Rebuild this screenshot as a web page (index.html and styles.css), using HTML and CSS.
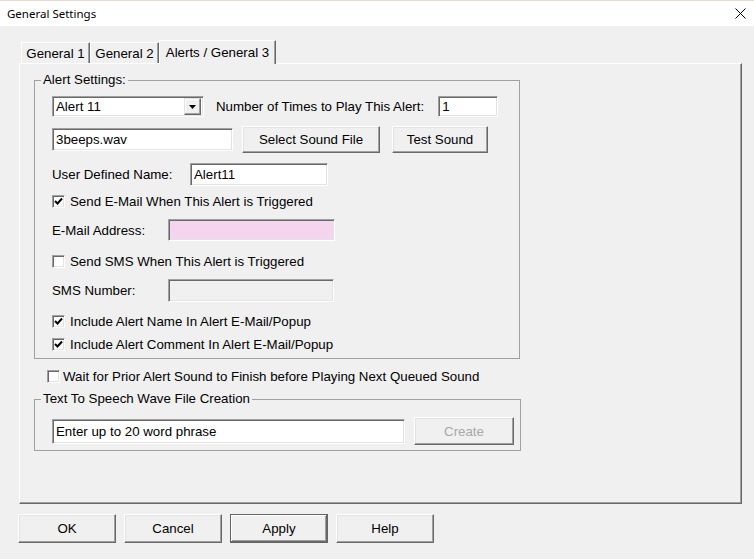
FILE: index.html
```html
<!DOCTYPE html>
<html lang="en">

<head>
    <meta charset="UTF-8">
    <title>General Settings</title>
    <link rel="stylesheet" href="styles.css">
</head>

<body>
    <div class="window">
        <div class="titlebar">
            <span>General Settings</span>
            <svg class="close" width="11" height="11" viewBox="0 0 11 11">
                <path d="M0.5 0.5 L10.5 10.5 M10.5 0.5 L0.5 10.5" stroke="#000" stroke-width="1" fill="none" />
            </svg>
        </div>

        <div class="tabs">
            <div class="tab">General 1</div>
            <div class="tab">General 2</div>
            <div class="tab active">Alerts / General 3</div>
        </div>

        <div class="panel">
            <fieldset class="group alerts">
                <legend>Alert Settings:</legend>
                <div class="rows">
                    <div class="row">
                        <div class="field combo">
                            <span>Alert 11</span>
                            <span class="drop">
                                <svg width="7" height="4" viewBox="0 0 7 4"><path d="M0 0 H7 L3.5 4 Z" fill="#000" /></svg>
                            </span>
                        </div>
                        <span class="label-times">Number of Times to Play This Alert:</span>
                        <div class="field count">1</div>
                    </div>
                    <div class="row">
                        <div class="field file">3beeps.wav</div>
                        <div class="btn select">Select Sound File</div>
                        <div class="btn test">Test Sound</div>
                    </div>
                    <div class="row">
                        <span class="label w-138">User Defined Name:</span>
                        <div class="field name">Alert11</div>
                    </div>
                    <div class="row">
                        <span class="check on"><svg width="9" height="9" viewBox="0 0 9 9"><path d="M1 4 L3.5 6.5 L8 1.5" /></svg></span>
                        <span>Send E-Mail When This Alert is Triggered</span>
                    </div>
                    <div class="row">
                        <span class="label w-116">E-Mail Address:</span>
                        <div class="field email"></div>
                    </div>
                    <div class="row">
                        <span class="check"></span>
                        <span>Send SMS When This Alert is Triggered</span>
                    </div>
                    <div class="row">
                        <span class="label w-116">SMS Number:</span>
                        <div class="field sms disabled"></div>
                    </div>
                    <div class="row">
                        <span class="check on"><svg width="9" height="9" viewBox="0 0 9 9"><path d="M1 4 L3.5 6.5 L8 1.5" /></svg></span>
                        <span>Include Alert Name In Alert E-Mail/Popup</span>
                    </div>
                    <div class="row">
                        <span class="check on"><svg width="9" height="9" viewBox="0 0 9 9"><path d="M1 4 L3.5 6.5 L8 1.5" /></svg></span>
                        <span>Include Alert Comment In Alert E-Mail/Popup</span>
                    </div>
                </div>
            </fieldset>

            <div class="row wait">
                <span class="check"></span>
                <span>Wait for Prior Alert Sound to Finish before Playing Next Queued Sound</span>
            </div>

            <fieldset class="group speech">
                <legend>Text To Speech Wave File Creation</legend>
                <div class="row tts">
                    <div class="field phrase">Enter up to 20 word phrase</div>
                    <div class="btn create">Create</div>
                </div>
            </fieldset>
        </div>

        <div class="buttons">
            <div class="btn">OK</div>
            <div class="btn">Cancel</div>
            <div class="btn default">Apply</div>
            <div class="btn">Help</div>
        </div>
    </div>
</body>

</html>
```

FILE: styles.css
```css
* {
    box-sizing: border-box;
}

body {
    margin: 0;
    background: #f0f0f0;
    font-family: "Liberation Sans", Arial, sans-serif;
    font-size: 13.3px;
    color: #000;
}

.window {
    width: 754px;
    height: 559px;
    overflow: hidden;
    background: #f0f0f0;
}

.titlebar {
    height: 26px;
    display: flex;
    align-items: center;
    justify-content: space-between;
    padding: 0 8px 0 7px;
    background: #fff;
    border-top: 1px solid #e4ddcf;
    font-family: "Noto Sans", sans-serif;
    font-size: 11.5px;
}

/* tabs */

.tabs {
    display: flex;
    align-items: flex-end;
    height: 23px;
    margin: 14px 0 0 21px;
}

.tab {
    width: 69px;
    height: 21px;
    display: flex;
    align-items: center;
    justify-content: center;
    border-top: 1px solid #fff;
    border-left: 1px solid #fff;
    border-right: 1px solid #696969;
    box-shadow: inset -1px 0 #a0a0a0;
    white-space: nowrap;
}

.tab.active {
    width: 117px;
    height: 24px;
    margin-bottom: -1px;
    position: relative;
    z-index: 1;
    background: #f0f0f0;
}

.panel {
    width: 723px;
    height: 441px;
    margin-left: 19px;
    padding: 8px 0 0 14px;
    border: 1px solid;
    border-color: #fff #696969 #696969 #fff;
    box-shadow: inset -1px -1px #a0a0a0;
}

/* group boxes */

.group {
    margin: 0;
    min-inline-size: 0;
    padding: 6px 0 6px 6px;
    border: 1px solid #a0a0a0;
}

.group legend {
    padding: 0 2px;
    line-height: 16px;
}

.alerts {
    width: 486px;
}

.speech {
    width: 487px;
    margin-top: 6px;
    padding-top: 10px;
    padding-bottom: 5px;
}

.rows {
    display: grid;
    grid-template-rows: 25px 41px 29px 24px 34px 28px 31px 30px 16px;
    margin-left: 11px;
}

.row {
    display: flex;
    align-items: center;
    white-space: nowrap;
}

.wait {
    height: 18px;
    margin: 8px 0 0 13px;
}

.tts {
    height: 28px;
    margin-left: 11px;
}

.label {
    display: block;
}

.w-138 {
    width: 138px;
}

.w-116 {
    width: 116px;
}

.label-times {
    margin: 0 14px 0 12px;
}

/* inputs */

.field {
    display: flex;
    align-items: center;
    padding: 0 3px;
    background: #fff;
    border: 1px solid;
    border-color: #a0a0a0 #fff #fff #a0a0a0;
    box-shadow: inset 1px 1px #696969, inset -1px -1px #e3e3e3;
    white-space: nowrap;
}

.combo {
    width: 152px;
    height: 21px;
    padding-right: 2px;
    justify-content: space-between;
}

.drop {
    width: 17px;
    height: 17px;
    display: flex;
    align-items: center;
    justify-content: center;
    background: #f0f0f0;
    border: 1px solid;
    border-color: #e3e3e3 #696969 #696969 #e3e3e3;
    box-shadow: inset -1px -1px #a0a0a0, inset 1px 1px #fff;
}

.count {
    width: 60px;
    height: 21px;
}

.file {
    width: 181px;
    height: 23px;
}

.name {
    width: 138px;
    height: 23px;
}

.email {
    width: 167px;
    height: 22px;
    background: #f5d4ef;
}

.sms {
    width: 166px;
    height: 23px;
}

.disabled {
    background: #f0f0f0;
}

.phrase {
    width: 353px;
    height: 25px;
}

/* checkboxes */

.check {
    width: 13px;
    height: 13px;
    margin-right: 5px;
    display: flex;
    align-items: center;
    justify-content: center;
    background: #fff;
    border: 1px solid;
    border-color: #a0a0a0 #fff #fff #a0a0a0;
    box-shadow: inset 1px 1px #696969, inset -1px -1px #e3e3e3;
}

.check svg path {
    fill: none;
    stroke: #000;
    stroke-width: 2;
}

.wait .check {
    margin-right: 3px;
}

/* buttons */

.btn {
    display: flex;
    align-items: center;
    justify-content: center;
    height: 28px;
    background: #f0f0f0;
    border: 1px solid;
    border-color: #fff #696969 #696969 #fff;
    box-shadow: inset -1px -1px #a0a0a0, inset 1px 1px #e3e3e3;
    white-space: nowrap;
}

.select {
    width: 138px;
    height: 27px;
    margin-left: 9px;
}

.test {
    width: 96px;
    height: 27px;
    margin-left: 12px;
}

.create {
    width: 100px;
    margin-left: 9px;
    color: #a8a8a8;
}

.buttons {
    display: flex;
    gap: 8px;
    margin: 10px 0 0 18px;
}

.buttons .btn {
    width: 98px;
    height: 29px;
}

.buttons .default {
    border-color: #646464;
    box-shadow: inset -1px -1px #696969, inset 1px 1px #fff, inset -2px -2px #a0a0a0;
}
```
